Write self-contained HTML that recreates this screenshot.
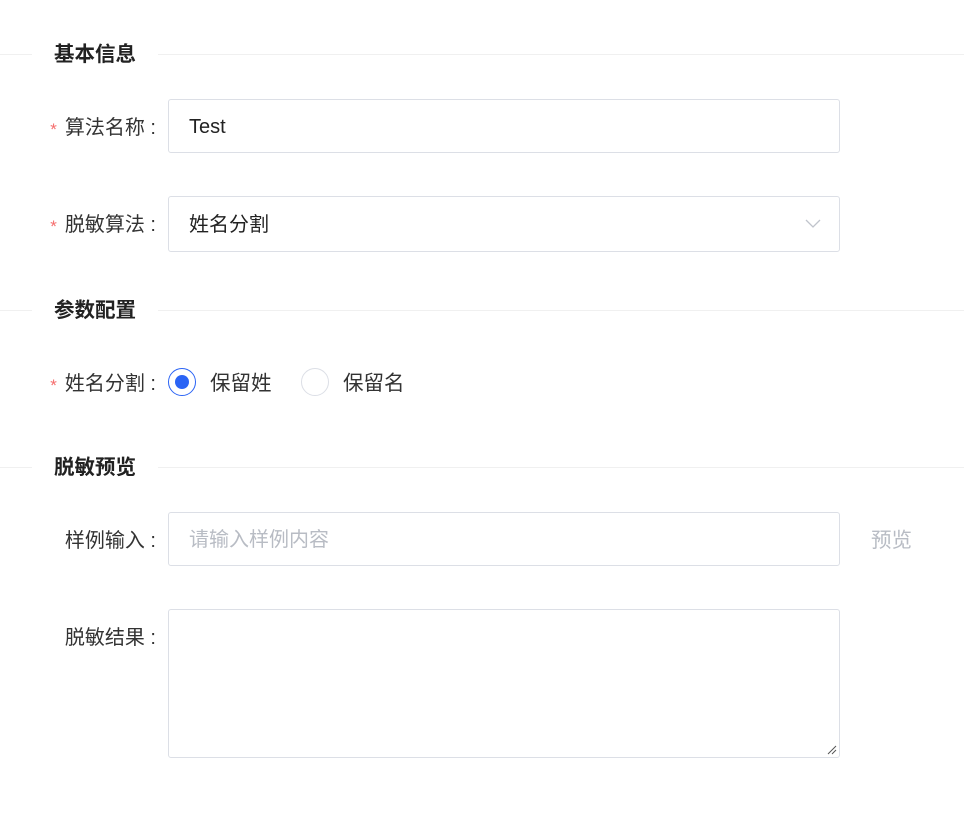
<!DOCTYPE html>
<html><head><meta charset="utf-8"><style>
body{margin:0;background:#fff;width:964px;height:819px;position:relative;overflow:hidden;font-family:"Liberation Sans","Noto Sans CJK SC",sans-serif;color:#333;}
.a{position:absolute}
.line{position:absolute;left:0;right:0;height:1px;background:#f0f0f0}
.h{position:absolute;left:32px;padding:0 22px;background:#fff;font-size:20.5px;font-weight:bold;color:#222;line-height:24px}
.lbl{position:absolute;right:808px;font-size:20px;color:#333;line-height:24px;white-space:nowrap}
.star{color:#f56c6c;font-size:17px;margin-right:8px;vertical-align:-1px}
.inp{position:absolute;left:168px;width:672px;border:1px solid #dcdfe6;border-radius:3px;box-sizing:border-box;font-size:20px;padding-left:20px}
</style></head><body>
<div class="line" style="top:54px"></div><div class="h" style="top:43px">基本信息</div>
<div class="lbl" style="top:116px"><span class="star">*</span>算法名称 :</div>
<div class="inp" style="top:99px;height:54px;line-height:54px;color:#222">Test</div>
<div class="lbl" style="top:213px"><span class="star">*</span>脱敏算法 :</div>
<div class="inp" style="top:196px;height:56px;line-height:56px;color:#222">姓名分割
<svg class="a" style="right:18px;top:22px" width="16" height="10" viewBox="0 0 16 10"><path d="M1 1l7 7 7-7" fill="none" stroke="#c0c4cc" stroke-width="1.3"/></svg></div>
<div class="line" style="top:310px"></div><div class="h" style="top:299px">参数配置</div>
<div class="lbl" style="top:372px"><span class="star">*</span>姓名分割 :</div>
<div class="a" style="left:168px;top:368px;width:28px;height:28px;border:1px solid #2b64f5;border-radius:50%;box-sizing:border-box"><div class="a" style="left:6px;top:6px;width:14px;height:14px;border-radius:50%;background:#2b64f5"></div></div>
<div class="a" style="left:210px;top:372px;font-size:20.5px;line-height:24px">保留姓</div>
<div class="a" style="left:301px;top:368px;width:28px;height:28px;border:1px solid #dcdfe6;border-radius:50%;box-sizing:border-box"></div>
<div class="a" style="left:343px;top:372px;font-size:20.5px;line-height:24px">保留名</div>
<div class="line" style="top:467px"></div><div class="h" style="top:456px">脱敏预览</div>
<div class="lbl" style="top:529px">样例输入 :</div>
<div class="inp" style="top:512px;height:54px;line-height:54px;color:#b8bcc4">请输入样例内容</div>
<div class="a" style="left:871px;top:529px;font-size:20.5px;line-height:24px;color:#b8bcc4">预览</div>
<div class="lbl" style="top:626px">脱敏结果 :</div>
<div class="inp" style="top:609px;height:149px"><svg class="a" style="right:2px;bottom:2px" width="10" height="10"><path d="M1 9L9 1M5 9L9 5" stroke="#555" stroke-width="1"/></svg></div>
</body></html>
